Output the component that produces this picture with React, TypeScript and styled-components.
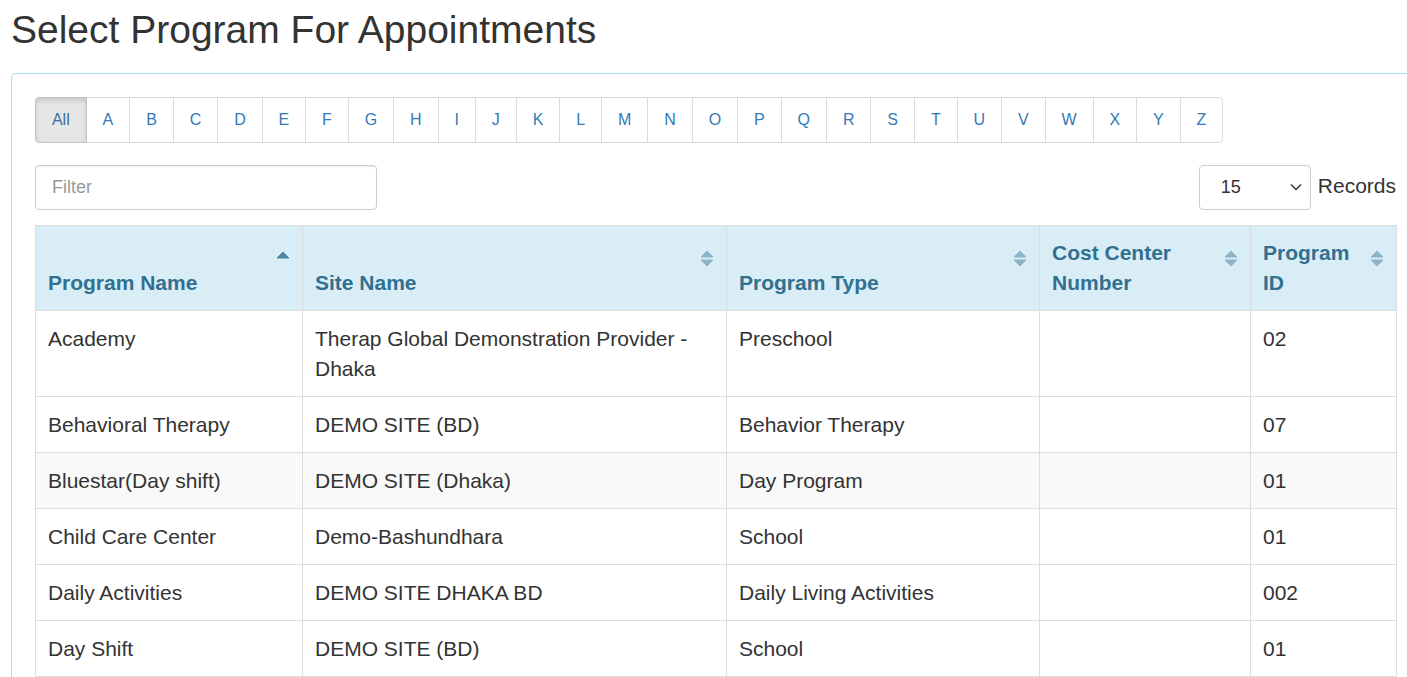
import styled, { createGlobalStyle } from "styled-components";

const GlobalStyle = createGlobalStyle`
  html, body {
    margin: 0;
    padding: 0;
    background: #fff;
    overflow: hidden;
  }
  body {
    font-family: "Liberation Sans", Arial, Helvetica, sans-serif;
    color: #333;
  }
`;

const Page = styled.div`
  padding: 0 0 0 11px;
  width: 1420px;
`;

const Title = styled.h1`
  margin: 9px 0 21px;
  font-size: 39px;
  font-weight: 400;
  line-height: 1.1;
  color: #333;
`;

const Panel = styled.div`
  border: 1px solid #a9e1ee;
  border-radius: 4px;
  padding: 23px;
  width: 1361px;
`;

const Pagination = styled.ul`
  display: flex;
  list-style: none;
  margin: 0;
  padding: 0;
`;

const PageLink = styled.li<{ $active?: boolean }>`
  margin-left: -1px;
  padding: 10px 15.95px;
  font-size: 16px;
  line-height: 24px;
  border: 1px solid ${(p) => (p.$active ? "#c4c4c4" : "#ddd")};
  background: ${(p) => (p.$active ? "#e6e6e6" : "#fff")};
  box-shadow: ${(p) => (p.$active ? "inset 0 3px 5px rgba(0,0,0,0.125)" : "none")};
  color: ${(p) => (p.$active ? "#3f6f9d" : "#337ab7")};
  cursor: pointer;
  position: relative;
  z-index: ${(p) => (p.$active ? 1 : 0)};
  &:first-child {
    margin-left: 0;
    border-radius: 4px 0 0 4px;
  }
  &:last-child {
    border-radius: 0 4px 4px 0;
  }
`;

const Toolbar = styled.div`
  display: flex;
  justify-content: space-between;
  align-items: center;
  margin: 22px 0 15px;
`;

const FilterInput = styled.input`
  box-sizing: border-box;
  width: 342px;
  height: 45px;
  padding: 10px 16px;
  font-family: inherit;
  font-size: 18px;
  color: #555;
  border: 1px solid #ccc;
  border-radius: 4px;
  box-shadow: inset 0 1px 1px rgba(0,0,0,0.075);
  &::placeholder {
    color: #999;
  }
`;

const RecordsBox = styled.div`
  display: flex;
  align-items: center;
  gap: 7px;
  font-size: 21px;
  color: #333;
  margin-top: -2px;
`;

const SelectWrap = styled.div`
  position: relative;
  width: 112px;
  height: 45px;
  margin-top: 2px;
`;

const Select = styled.select`
  appearance: none;
  box-sizing: border-box;
  width: 100%;
  height: 100%;
  padding: 0 0 0 21px;
  font-family: inherit;
  font-size: 18px;
  color: #333;
  background: #fff;
  border: 1px solid #ccc;
  border-radius: 4px;
`;

const Chevron = styled.svg`
  position: absolute;
  right: 9px;
  top: 18px;
  width: 12px;
  height: 8px;
  pointer-events: none;
`;

const Table = styled.table`
  border-collapse: collapse;
  width: 1361px;
  table-layout: fixed;
  font-size: 21px;
  line-height: 30px;
`;

const HeadCell = styled.th`
  position: relative;
  text-align: left;
  vertical-align: bottom;
  font-weight: 700;
  color: #31708f;
  background: #d9edf7;
  border: 1px solid #ddd;
  padding: 12px 36px 12.5px 12px;
`;

const SortIcon = styled.svg`
  position: absolute;
  right: 12px;
  top: 24px;
  width: 14px;
  height: 17px;
`;

const Row = styled.tr<{ $shade?: boolean }>`
  background: ${(p) => (p.$shade ? "#f9f9f9" : "#fff")};
`;

const Cell = styled.td`
  vertical-align: top;
  border: 1px solid #ddd;
  padding: 12.5px 12px 12.5px 12px;
  color: #333;
`;

const letters = ["All", ..."ABCDEFGHIJKLMNOPQRSTUVWXYZ".split("")];

const columns = [
  { label: "Program Name", width: 267, sort: "asc" },
  { label: "Site Name", width: 424, sort: "both" },
  { label: "Program Type", width: 313, sort: "both" },
  { label: "Cost Center Number", width: 211, sort: "both" },
  { label: "Program ID", width: 146, sort: "both" },
];

const rows = [
  ["Academy", "Therap Global Demonstration Provider - Dhaka", "Preschool", "", "02"],
  ["Behavioral Therapy", "DEMO SITE (BD)", "Behavior Therapy", "", "07"],
  ["Bluestar(Day shift)", "DEMO SITE (Dhaka)", "Day Program", "", "01"],
  ["Child Care Center", "Demo-Bashundhara", "School", "", "01"],
  ["Daily Activities", "DEMO SITE DHAKA BD", "Daily Living Activities", "", "002"],
  ["Day Shift", "DEMO SITE (BD)", "School", "", "01"],
];

function Sort({ kind }: { kind: string }) {
  if (kind === "asc") {
    return (
      <SortIcon viewBox="0 0 14 17">
        <path d="M1 8 L7 2 L13 8 Z" fill="#4f84a4" strokeLinejoin="round" stroke="#4f84a4" strokeWidth="1" />
      </SortIcon>
    );
  }
  return (
    <SortIcon viewBox="0 0 14 17">
      <path d="M1 7 L7 1 L13 7 Z" fill="#8db4c7" stroke="#8db4c7" strokeWidth="1" strokeLinejoin="round" />
      <path d="M1 10 L13 10 L7 16 Z" fill="#8db4c7" stroke="#8db4c7" strokeWidth="1" strokeLinejoin="round" />
    </SortIcon>
  );
}

export default function App() {
  return (
    <>
      <GlobalStyle />
      <Page>
        <Title>Select Program For Appointments</Title>
        <Panel>
          <Pagination>
            {letters.map((l) => (
              <PageLink key={l} $active={l === "All"}>
                {l}
              </PageLink>
            ))}
          </Pagination>
          <Toolbar>
            <FilterInput placeholder="Filter" />
            <RecordsBox>
              <SelectWrap>
                <Select defaultValue="15">
                  <option>10</option>
                  <option>15</option>
                  <option>25</option>
                  <option>50</option>
                </Select>
                <Chevron viewBox="0 0 12 8">
                  <path d="M1 1.5 L6 6.5 L11 1.5" fill="none" stroke="#333" strokeWidth="1.5" />
                </Chevron>
              </SelectWrap>
              Records
            </RecordsBox>
          </Toolbar>
          <Table>
            <colgroup>
              {columns.map((c) => (
                <col key={c.label} style={{ width: c.width }} />
              ))}
            </colgroup>
            <thead>
              <tr>
                {columns.map((c) => (
                  <HeadCell key={c.label}>
                    {c.label}
                    <Sort kind={c.sort} />
                  </HeadCell>
                ))}
              </tr>
            </thead>
            <tbody>
              {rows.map((r, i) => (
                <Row key={i} $shade={i === 2}>
                  {r.map((v, j) => (
                    <Cell key={j}>{v}</Cell>
                  ))}
                </Row>
              ))}
            </tbody>
          </Table>
        </Panel>
      </Page>
    </>
  );
}
